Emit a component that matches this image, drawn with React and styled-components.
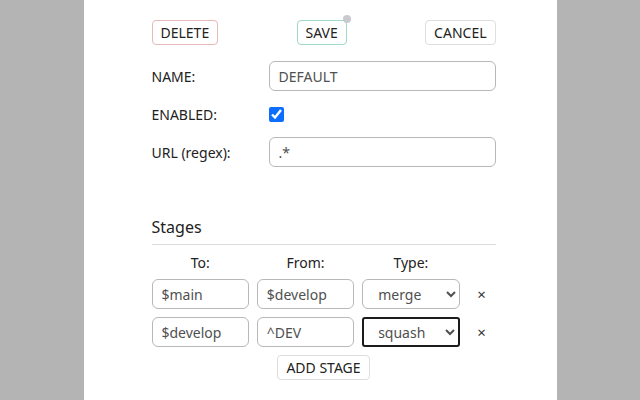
import styled, { createGlobalStyle } from "styled-components";

const GlobalStyle = createGlobalStyle`
  html, body {
    margin: 0;
    padding: 0;
    background: #b4b4b4;
  }
  body {
    font-family: "Noto Sans", "Open Sans", sans-serif;
    color: #222;
  }
`;

const Page = styled.div`
  width: 473px;
  min-height: 400px;
  margin: 0 auto;
  background: #ffffff;
  box-sizing: border-box;
  padding: 20px 61px 0 68px;
`;

const Toolbar = styled.div`
  display: flex;
  justify-content: space-between;
  align-items: center;
  width: 344px;
`;

const borderColors = {
  danger: "#e7b9b9",
  success: "#9ed8c6",
  plain: "#dedede",
};

const Button = styled.button`
  position: relative;
  height: 25px;
  padding: 0 8px;
  background: #fff;
  border: 1px solid ${(p) => borderColors[p.$tone || "plain"]};
  border-radius: 4px;
  font-family: "Noto Sans", sans-serif;
  font-size: 14px;
  color: #222;
  text-transform: uppercase;
  line-height: 1;
  cursor: pointer;
`;

const Dot = styled.span`
  position: absolute;
  top: -6px;
  right: -5px;
  width: 8px;
  height: 8px;
  border-radius: 50%;
  background: #c9c9d0;
`;

const Form = styled.div`
  display: flex;
  flex-direction: column;
  gap: 8px;
  margin-top: 16px;
  width: 344px;
`;

const Row = styled.div`
  display: grid;
  grid-template-columns: 117px 1fr;
  align-items: center;
  height: 30px;
`;

const Label = styled.label`
  font-size: 14px;
  color: #222;
`;

const TextInput = styled.input`
  box-sizing: border-box;
  width: 100%;
  height: 30px;
  padding: 0 9px;
  border: 1px solid #b8b8b8;
  border-radius: 6px;
  font-family: "Noto Sans", sans-serif;
  font-size: 14px;
  color: #505050;
  background: #fff;
  outline: none;
`;

const Check = styled.input`
  width: 15px;
  height: 15px;
  margin: 0;
  accent-color: #0d6efd;
`;

const Heading = styled.div`
  margin-top: 49px;
  width: 344px;
  padding-bottom: 6px;
  border-bottom: 1px solid #dcdcdc;
  font-size: 16px;
  line-height: 22px;
  color: #222;
`;

const Table = styled.div`
  display: grid;
  grid-template-columns: repeat(3, 1fr) 28px;
  column-gap: 8px;
  row-gap: 8px;
  width: 344px;
  margin-top: 8px;
`;

const ColHead = styled.div`
  text-align: center;
  font-size: 14px;
  line-height: 20px;
  color: #222;
  margin-bottom: -2px;
`;

const Select = styled.select`
  box-sizing: border-box;
  width: 100%;
  height: 30px;
  padding: 0 8px 0 ${(p) => (p.$focused ? "10px" : "11px")};
  border: ${(p) => (p.$focused ? "2px solid #1c1c1c" : "1px solid #b8b8b8")};
  border-radius: ${(p) => (p.$focused ? "3px" : "6px")};
  font-family: "Noto Sans", sans-serif;
  font-size: 14px;
  color: #505050;
  background: #fff;
  outline: none;
`;

const Remove = styled.button`
  border: none;
  background: none;
  padding: 0;
  font-size: 15px;
  color: #333;
  font-family: "Noto Sans", sans-serif;
  cursor: pointer;
`;

const Footer = styled.div`
  display: flex;
  justify-content: center;
  width: 344px;
  margin-top: 8px;
`;

const stages = [
  { to: "$main", from: "$develop", type: "merge" },
  { to: "$develop", from: "^DEV", type: "squash", focused: true },
];

export default function App() {
  return (
    <>
      <GlobalStyle />
      <Page>
        <Toolbar>
          <Button $tone="danger">Delete</Button>
          <Button $tone="success">
            Save
            <Dot />
          </Button>
          <Button>Cancel</Button>
        </Toolbar>

        <Form>
          <Row>
            <Label>NAME:</Label>
            <TextInput defaultValue="DEFAULT" />
          </Row>
          <Row>
            <Label>ENABLED:</Label>
            <Check type="checkbox" defaultChecked />
          </Row>
          <Row>
            <Label>URL (regex):</Label>
            <TextInput defaultValue=".*" />
          </Row>
        </Form>

        <Heading>Stages</Heading>

        <Table>
          <ColHead>To:</ColHead>
          <ColHead>From:</ColHead>
          <ColHead>Type:</ColHead>
          <div />
          {stages.map((s, i) => (
            <>
              <TextInput key={"t" + i} defaultValue={s.to} />
              <TextInput key={"f" + i} defaultValue={s.from} />
              <Select key={"s" + i} defaultValue={s.type} $focused={s.focused}>
                <option value="merge">merge</option>
                <option value="squash">squash</option>
                <option value="rebase">rebase</option>
              </Select>
              <Remove key={"r" + i}>×</Remove>
            </>
          ))}
        </Table>

        <Footer>
          <Button>Add stage</Button>
        </Footer>
      </Page>
    </>
  );
}
